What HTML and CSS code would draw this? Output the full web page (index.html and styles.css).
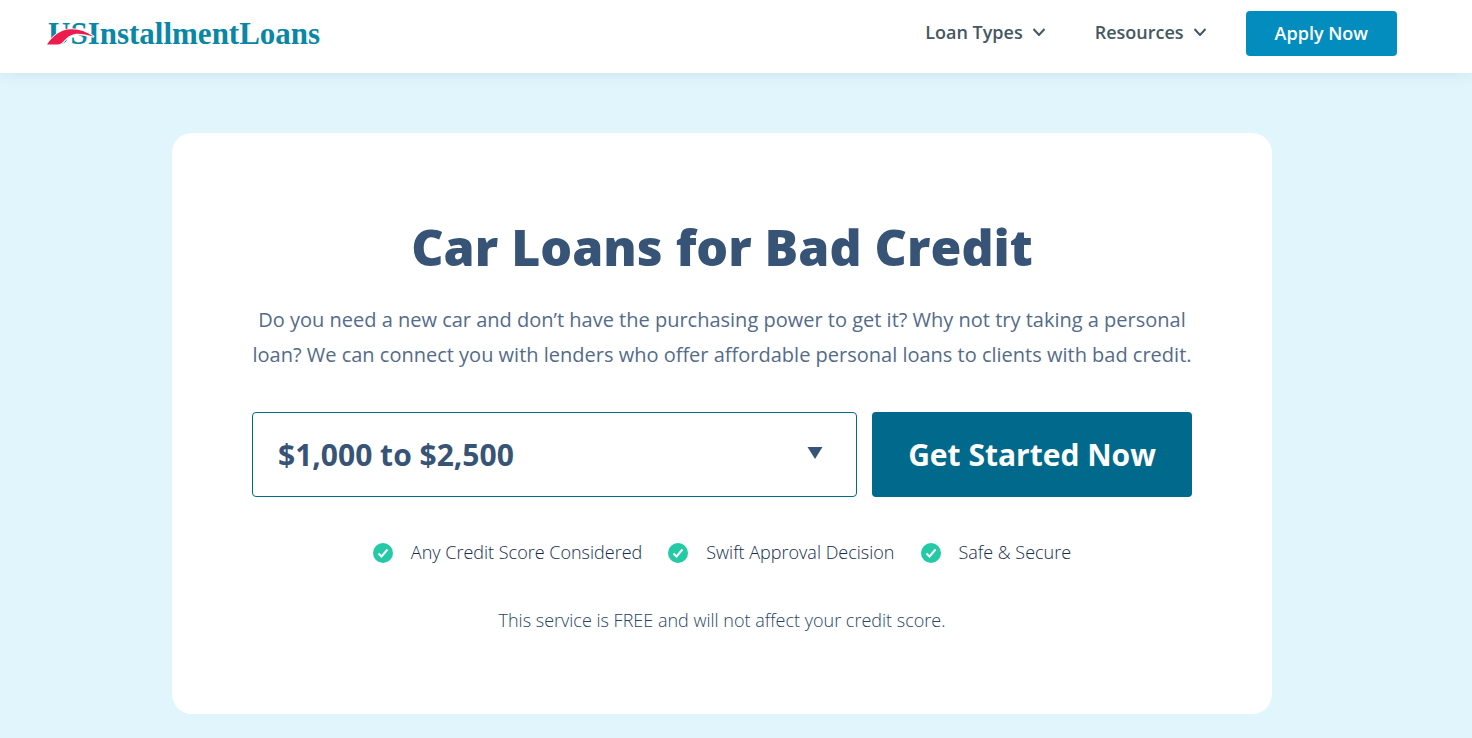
FILE: index.html
```html
<!DOCTYPE html>
<html lang="en">
<head>
<meta charset="utf-8">
<meta name="viewport" content="width=device-width, initial-scale=1">
<title>Car Loans for Bad Credit</title>
<link rel="stylesheet" href="styles.css">
</head>
<body>
<header class="header">
  <a class="logo" href="#">USInstallmentLoans
    <svg class="logo-swoosh" viewBox="0 0 48 20" aria-hidden="true"><path d="M0 17.500C6 9 13 2.500 24 2.300c9-.2 16 3 23 7.500-8-2-14-3.500-19-2.800C18 8.500 17 17.500 11 17.500Z" fill="#ee1c4e" stroke="#fff" stroke-width="2" paint-order="stroke"/></svg>
  </a>
  <nav class="nav">
    <button class="nav-item" type="button">Loan Types
      <svg class="chevron" viewBox="0 0 12 8" aria-hidden="true"><path d="M.5 1L6 7l5.500-6"/></svg>
    </button>
    <button class="nav-item" type="button">Resources
      <svg class="chevron" viewBox="0 0 12 8" aria-hidden="true"><path d="M.5 1L6 7l5.500-6"/></svg>
    </button>
    <a class="apply" href="#">Apply Now</a>
  </nav>
</header>
<main class="hero">
  <section class="card">
    <h1 class="title">Car Loans for Bad Credit</h1>
    <p class="lead">Do you need a new car and don’t have the purchasing power to get it? Why not try taking a personal loan? We can connect you with lenders who offer affordable personal loans to clients with bad credit.</p>
    <form class="form">
      <div class="select-wrap">
        <select class="amount" aria-label="Loan amount">
          <option>$1,000 to $2,500</option>
        </select>
        <svg class="arrow" viewBox="0 0 16 12" aria-hidden="true"><path d="M.5 0h15L8 12Z" fill="#375477"/></svg>
      </div>
      <button class="start" type="button">Get Started Now</button>
    </form>
    <ul class="benefits">
      <li class="benefit"><svg class="check" viewBox="0 0 20 20" aria-hidden="true"><circle cx="10" cy="10" r="10"/><path d="M5.500 10.500l3 3 6-7"/></svg>Any Credit Score Considered</li>
      <li class="benefit"><svg class="check" viewBox="0 0 20 20" aria-hidden="true"><circle cx="10" cy="10" r="10"/><path d="M5.500 10.500l3 3 6-7"/></svg>Swift Approval Decision</li>
      <li class="benefit"><svg class="check" viewBox="0 0 20 20" aria-hidden="true"><circle cx="10" cy="10" r="10"/><path d="M5.500 10.500l3 3 6-7"/></svg>Safe &amp; Secure</li>
    </ul>
    <p class="note">This service is FREE and will not affect your credit score.</p>
  </section>
</main>
</body>
</html>
```
FILE: styles.css
```css
* { box-sizing: border-box; }
body {
  margin: 0;
  font-family: "Open Sans", "Noto Sans", sans-serif;
  color: #375477;
  background: #e1f5fc;
}
.header {
  position: relative;
  display: flex;
  justify-content: space-between;
  align-items: flex-start;
  padding: 11px 75px 17px 48px;
  background: #fff;
  box-shadow: 0 0 15px rgba(0, 60, 90, 0.1);
}
.logo {
  position: relative;
  font: bold 31px/45px "Liberation Serif", serif;
  color: #0a87a5;
  text-decoration: none;
}
.logo-swoosh {
  position: absolute;
  left: -1px;
  top: 16px;
  width: 48px;
  height: 20px;
}
.nav {
  display: flex;
  align-items: flex-start;
}
.nav-item {
  display: flex;
  align-items: center;
  gap: 10px;
  margin-right: 50px;
  padding: 0;
  border: 0;
  background: none;
  font: 600 18px/42px "Open Sans", sans-serif;
  color: #455761;
}
.nav-item:nth-child(2) { margin-right: 40px; }
.chevron {
  width: 12px;
  height: 8px;
  fill: none;
  stroke: currentColor;
  stroke-width: 2;
}
.apply {
  padding: 0 29px;
  border-radius: 4px;
  background: #038dbf;
  color: #fff;
  font-weight: 600;
  font-size: 18px;
  line-height: 45px;
  text-decoration: none;
}
.hero { padding: 60px 28px 24px 0; }
.card {
  max-width: 1100px;
  margin: 0 auto;
  padding: 80px;
  border-radius: 20px;
  background: #fff;
  text-align: center;
}
.title {
  margin: 0 0 20px;
  font-weight: 800;
  font-size: 50px;
  line-height: 69px;
}
.lead {
  margin: 0;
  color: #546b8a;
  font-size: 20px;
  line-height: 35px;
}
.form {
  display: flex;
  gap: 15px;
  margin: 40px 0 38px;
}
.select-wrap {
  position: relative;
  flex: 1;
}
.amount {
  appearance: none;
  width: 100%;
  height: 85px;
  padding: 0 25px;
  border: 1px solid #00698c;
  border-radius: 4px;
  background: #fff;
  color: #375477;
  font: 700 30px "Open Sans", sans-serif;
}
.arrow {
  position: absolute;
  right: 34px;
  top: 35px;
  width: 16px;
  height: 12px;
  pointer-events: none;
}
.start {
  width: 320px;
  border: 0;
  border-radius: 4px;
  background: #00698c;
  color: #fff;
  font: 700 30px "Open Sans", sans-serif;
}
.benefits {
  display: flex;
  justify-content: center;
  gap: 26px;
  margin: 0 0 36px;
  padding: 0;
  list-style: none;
  color: #142c4c;
  font-weight: 300;
  font-size: 18px;
  line-height: 35px;
}
.benefit {
  display: flex;
  align-items: center;
  gap: 18px;
}
.check {
  width: 20px;
  height: 20px;
  fill: #24c9a5;
}
.check path {
  fill: none;
  stroke: #fff;
  stroke-width: 2;
}
.note {
  margin: 0;
  color: #284466;
  font-weight: 300;
  font-size: 18px;
  line-height: 28px;
}
```
